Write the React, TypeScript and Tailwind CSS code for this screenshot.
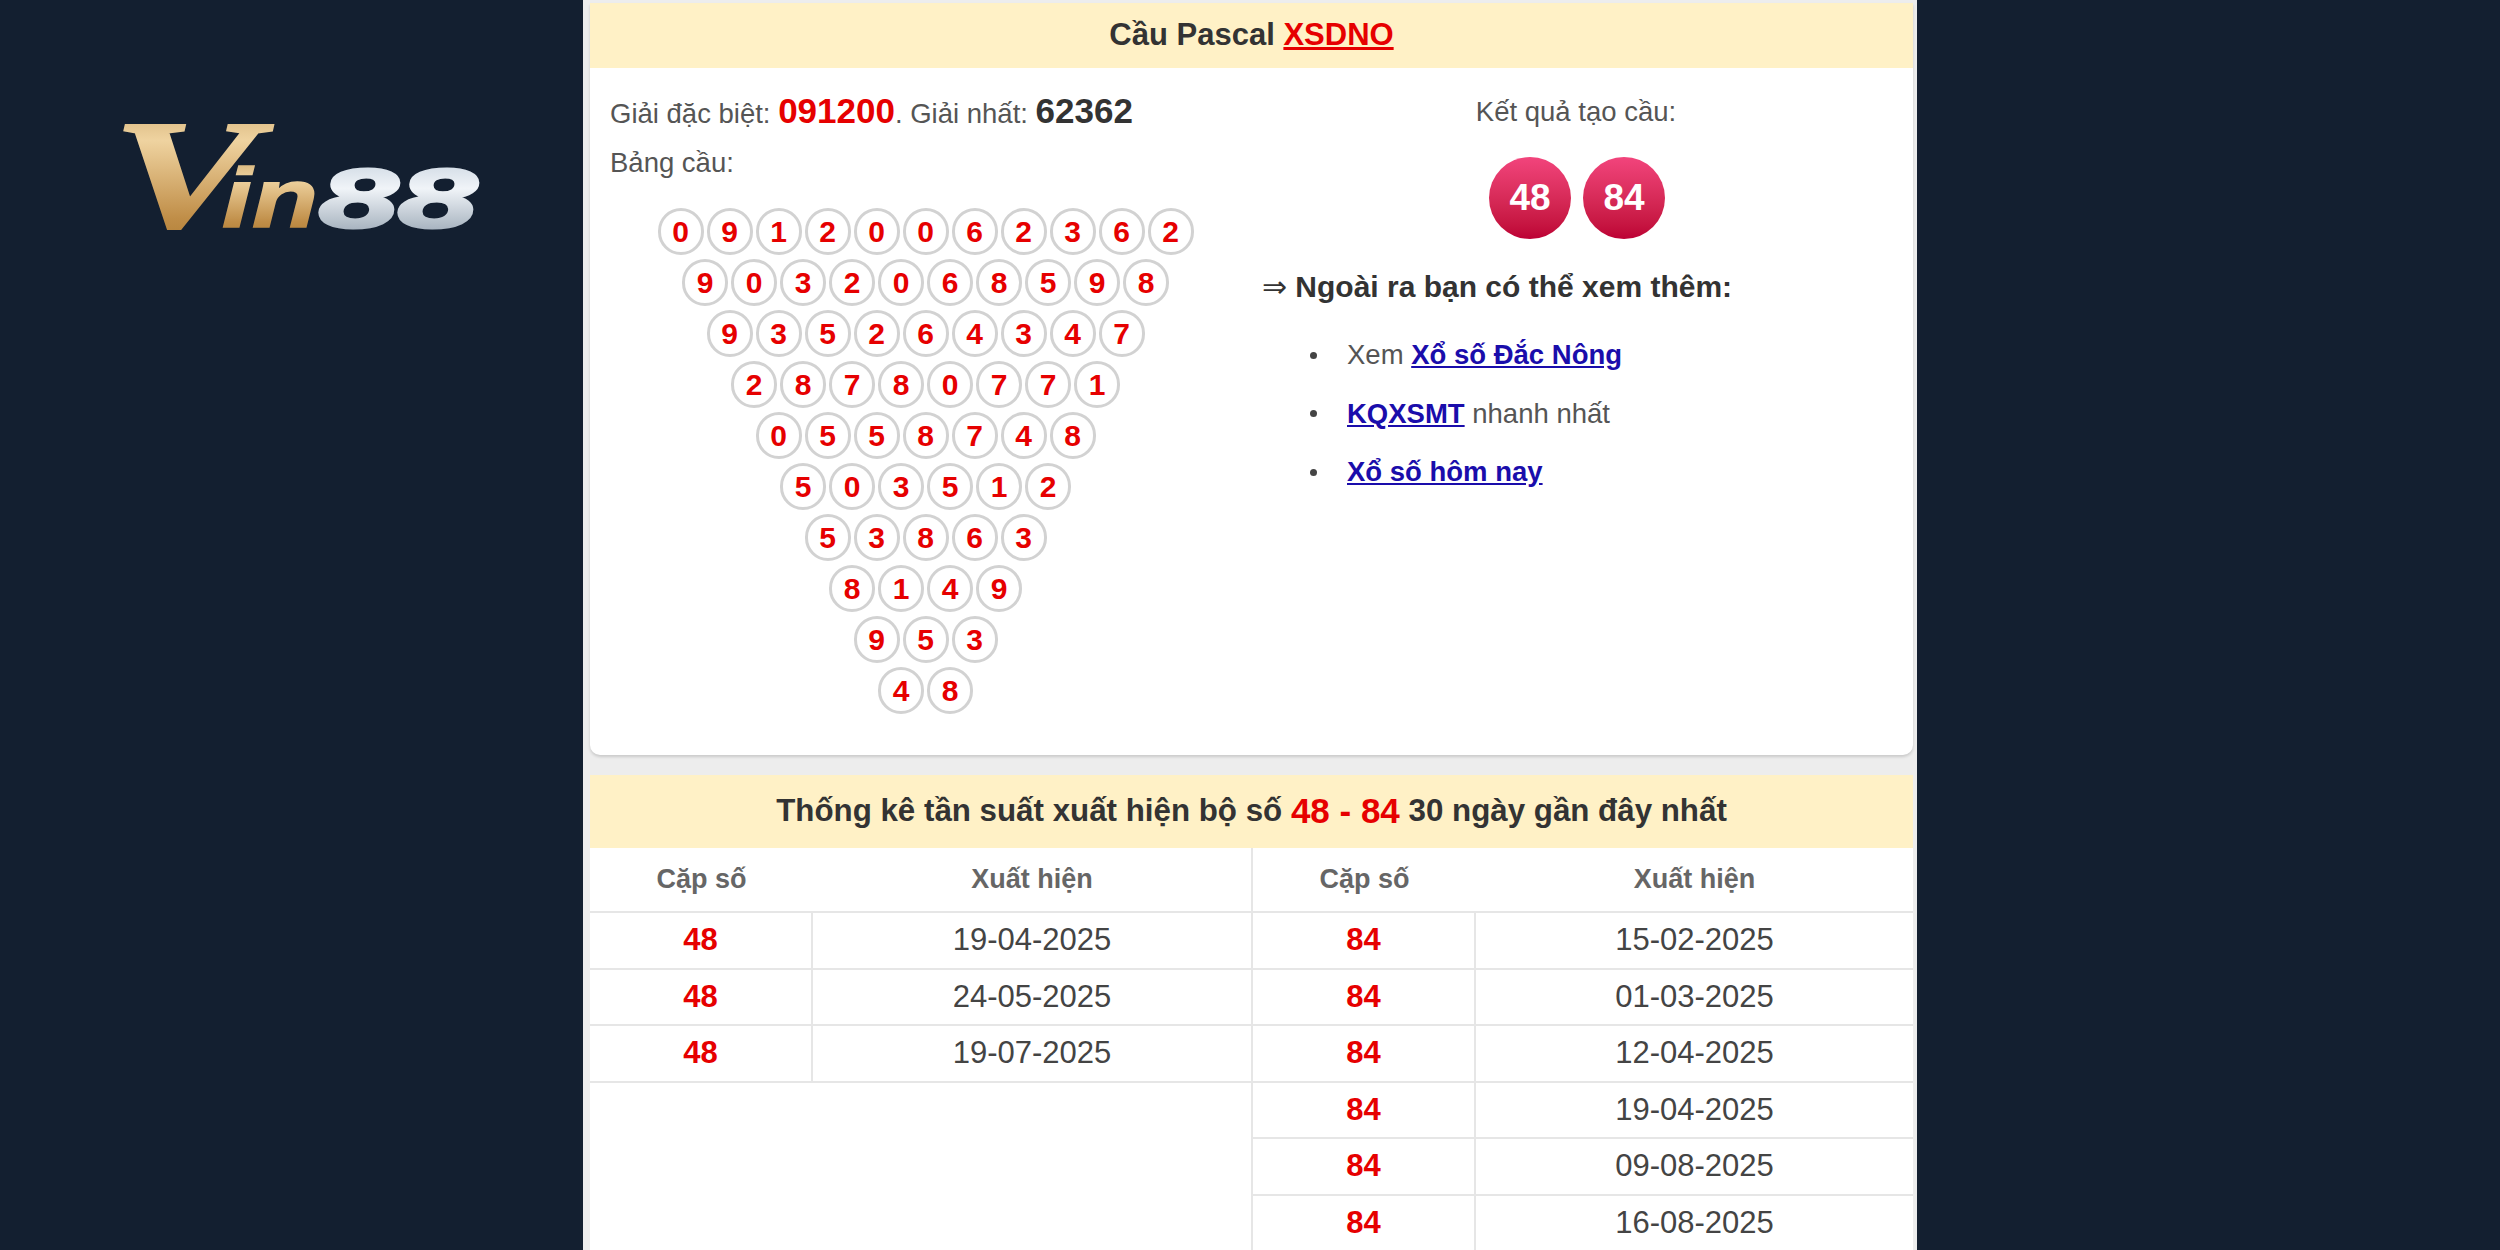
const pascalRows = [
  "09120062362",
  "9032068598",
  "935264347",
  "28780771",
  "0558748",
  "503512",
  "53863",
  "8149",
  "953",
  "48",
];

const leftDates = ["19-04-2025", "24-05-2025", "19-07-2025"];
const rightDates = ["15-02-2025", "01-03-2025", "12-04-2025", "19-04-2025", "09-08-2025", "16-08-2025"];

const Logo = () => (
  <svg width="400" height="150" viewBox="0 0 400 150" className="block">
    <defs>
      <linearGradient id="gold" x1="0" y1="0" x2="0" y2="1">
        <stop offset="0" stopColor="#c9a468" />
        <stop offset="0.3" stopColor="#efd3a0" />
        <stop offset="0.75" stopColor="#c08e48" />
        <stop offset="1" stopColor="#a9762e" />
      </linearGradient>
      <linearGradient id="silver" x1="0" y1="0" x2="0" y2="1">
        <stop offset="0" stopColor="#c3cfdc" />
        <stop offset="0.4" stopColor="#f0f4f8" />
        <stop offset="1" stopColor="#8d9cab" />
      </linearGradient>
    </defs>
    <text
      x="2"
      y="117"
      fill="url(#gold)"
      stroke="url(#gold)"
      strokeWidth="2"
      fontFamily="'Liberation Serif', serif"
      fontStyle="italic"
      fontWeight="700"
      fontSize="155"
      textLength="146"
      lengthAdjust="spacingAndGlyphs"
    >
      V
    </text>
    <text
      x="112"
      y="117"
      fill="url(#gold)"
      stroke="url(#gold)"
      strokeWidth="1.5"
      fontFamily="'Liberation Sans', sans-serif"
      fontStyle="italic"
      fontWeight="700"
      fontSize="84"
      textLength="96"
      lengthAdjust="spacingAndGlyphs"
    >
      in
    </text>
    <text
      x="209"
      y="117"
      fill="url(#silver)"
      stroke="url(#silver)"
      strokeWidth="3"
      fontFamily="'Liberation Sans', sans-serif"
      fontStyle="italic"
      fontWeight="700"
      fontSize="84"
      textLength="158"
      lengthAdjust="spacingAndGlyphs"
    >
      88
    </text>
  </svg>
);

const StatsTable = ({ pair, dates }: { pair: string; dates: string[] }) => (
  <div className="flex-1">
    <div className="flex h-[65px] items-center border-b-2 border-[#e6e6e6] text-[27px] font-bold text-[#666]">
      <div className="w-[223px] text-center">Cặp số</div>
      <div className="flex-1 text-center">Xuất hiện</div>
    </div>
    {dates.map((date, i) => (
      <div key={i} className="flex h-[56.5px] items-center border-b-2 border-[#e6e6e6] text-[31px] text-[#444]">
        <div className="flex h-full w-[223px] items-center justify-center border-r-2 border-[#e6e6e6] font-bold text-[#e60000]">
          {pair}
        </div>
        <div className="flex-1 text-center">{date}</div>
      </div>
    ))}
  </div>
);

export default function App() {
  return (
    <div className="flex h-[1250px] overflow-hidden bg-[#131f30] font-['Liberation_Sans',Arial,sans-serif]">
      <div className="w-[583px] shrink-0 pl-[110px] pt-[110px]">
        <Logo />
      </div>

      <main className="w-[1334px] shrink-0 bg-[#ededed] pl-[7px] pr-[4px] pt-[3px]">
        {/* Pascal card */}
        <section className="h-[752px] rounded-b-[10px] bg-white shadow-[0_2px_3px_rgba(0,0,0,0.15)]">
          <h2 className="flex h-[65px] items-center justify-center bg-[#fff1c6] text-[31px] font-bold text-[#333]">
            Cầu Pascal&nbsp;<span className="text-[#e60000] underline">XSDNO</span>
          </h2>
          <div className="flex">
            <div className="w-[652px] pl-5">
              <p className="mt-[19px] h-[48px] text-[27.5px] leading-[48px] text-[#555]">
                Giải đặc biệt: <b className="text-[35px] text-[#e60000]">091200</b>. Giải nhất:{" "}
                <b className="text-[35px] text-[#333]">62362</b>
              </p>
              <p className="mt-[3px] h-[50px] text-[27.5px] leading-[50px] text-[#555]">Bảng cầu:</p>
              <div className="mt-[20px] flex flex-col items-center gap-[4px] pr-[1px]">
                {pascalRows.map((row, r) => (
                  <div key={r} className="flex gap-[3px]">
                    {row.split("").map((digit, i) => (
                      <span
                        key={i}
                        className="flex h-[47px] w-[46px] items-center justify-center rounded-full border-[3px] border-[#d2d2d2] text-[30px] font-bold text-[#e60000]"
                      >
                        {digit}
                      </span>
                    ))}
                  </div>
                ))}
              </div>
            </div>

            <div className="flex-1 pr-[3px]">
              <p className="mt-[20px] h-[48px] text-center text-[27.5px] leading-[48px] text-[#555]">Kết quả tạo cầu:</p>
              <div className="mt-[21px] flex justify-center gap-[12px] pl-[2px]">
                {["48", "84"].map((n) => (
                  <span
                    key={n}
                    className="flex h-[82px] w-[82px] items-center justify-center rounded-full bg-gradient-to-b from-[#f2447c] to-[#bd0034] text-[37px] font-bold text-white"
                  >
                    {n}
                  </span>
                ))}
              </div>
              <p className="mt-[28px] pl-[20px] text-[30px] font-bold leading-[40px] text-[#333]">
                <span className="font-normal">⇒</span> Ngoài ra bạn có thể xem thêm:
              </p>
              <ul className="mt-[19px] pl-[68px] text-[27.5px] leading-[58.5px] text-[#555]">
                <li className="flex items-center gap-[30px]">
                  <span className="h-[7px] w-[7px] rounded-full bg-[#444]" />
                  <span>
                    Xem <a className="font-bold text-[#1a0dab] underline">Xổ số Đắc Nông</a>
                  </span>
                </li>
                <li className="flex items-center gap-[30px]">
                  <span className="h-[7px] w-[7px] rounded-full bg-[#444]" />
                  <span>
                    <a className="font-bold text-[#1a0dab] underline">KQXSMT</a> nhanh nhất
                  </span>
                </li>
                <li className="flex items-center gap-[30px]">
                  <span className="h-[7px] w-[7px] rounded-full bg-[#444]" />
                  <a className="font-bold text-[#1a0dab] underline">Xổ số hôm nay</a>
                </li>
              </ul>
            </div>
          </div>
        </section>

        {/* Frequency table */}
        <section className="mt-[20px] bg-white pb-[100px]">
          <h2 className="flex h-[73px] items-center justify-center whitespace-pre bg-[#fff1c6] text-[31.3px] font-bold text-[#333]">
            Thống kê tần suất xuất hiện bộ số <span className="text-[35px] text-[#e60000]">48 - 84</span> 30 ngày gần đây nhất
          </h2>
          <div className="flex">
            <div className="flex w-[663px] border-r-2 border-[#e6e6e6]">
              <StatsTable pair="48" dates={leftDates} />
            </div>
            <StatsTable pair="84" dates={rightDates} />
          </div>
        </section>
      </main>

      <div className="flex-1" />
    </div>
  );
}
